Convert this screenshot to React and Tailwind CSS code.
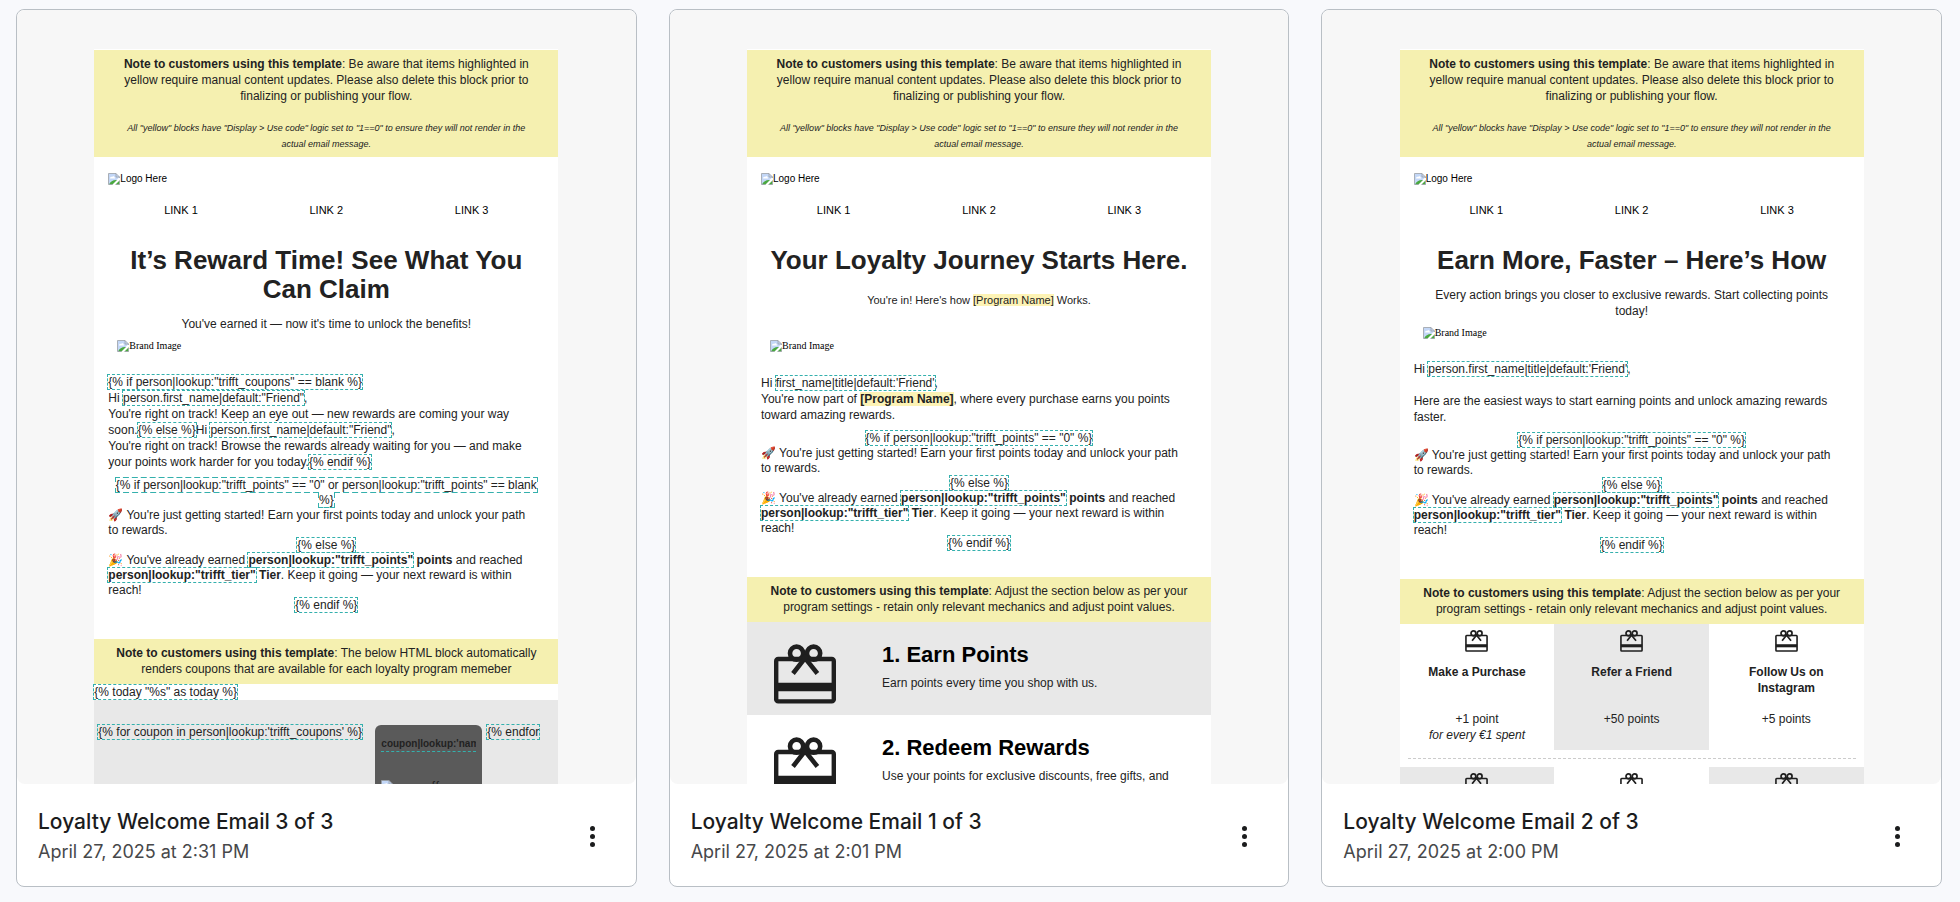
import React from "react";

const Code = ({ children }) => (
  <span className="outline-1 outline-dashed outline-[#34b0ad]">{children}</span>
);

const BrokenImage = () => (
  <svg viewBox="0 0 12 12" className="w-3 h-3 shrink-0">
    <path d="M0.5 0.5H8L11.5 4L4 11.5H0.5Z" fill="#c3d7f7" />
    <path d="M2 5.5C2 4 3.3 3.6 4 4C4.6 2.6 6.6 3 6.6 4.4C7.4 4.6 7.4 5.5 6.8 5.5Z" fill="#fff" />
    <path d="M1 11.5C2.5 8.2 5.5 6.6 9 7L4.5 11.5Z" fill="#4aa83f" />
    <path d="M7.5 11.5L11.5 7.5V11.5Z" fill="#4aa83f" />
    <path d="M4.5 11.5H0.5V0.5H8L11.5 4V5M8 0.5V4H11.5M11.5 7.5V11.5H7.5" fill="none" stroke="#9aa0a6" strokeWidth="0.8" />
  </svg>
);

const Gift = ({ className }) => (
  <svg viewBox="0 0 62 60" className={className} fill="none" stroke="#1f1f1f">
    <rect x="2.2" y="15" width="57.6" height="42.4" rx="2" strokeWidth="4.4" />
    <path d="M2 43H60" strokeWidth="8.4" />
    <circle cx="22.6" cy="9.2" r="6.6" strokeWidth="4.6" />
    <circle cx="39.6" cy="9.2" r="6.6" strokeWidth="4.6" />
    <path d="M33 11.5L19 29.5M29 11.5L43.4 29.5" strokeWidth="4.6" />
  </svg>
);

const Note = ({ children }) => (
  <div className="bg-[#f5f0b0] px-3 pt-[6px] pb-[7px] text-center">
    <b>Note to customers using this template</b>: {children}
  </div>
);

const EmailTop = ({ title, children }) => (
  <>
    <div className="bg-[#f5f0b0] px-3 pt-[6px] pb-[5px] text-center">
      <p>
        <b>Note to customers using this template</b>: Be aware that items highlighted in
        <br />
        yellow require manual content updates. Please also delete this block prior to
        <br />
        finalizing or publishing your flow.
      </p>
      <p className="mt-4 text-[9px] leading-4 italic">
        All "yellow" blocks have "Display &gt; Use code" logic set to "1==0" to ensure they will not render in the
        <br />
        actual email message.
      </p>
    </div>
    <div className="flex items-center mt-4 px-[14px] text-[10px] leading-3 text-black">
      <BrokenImage />
      Logo Here
    </div>
    <nav className="grid grid-cols-3 mt-[17px] px-[14px] text-[11px] leading-4 text-center text-black">
      <a href="#">LINK 1</a>
      <a href="#">LINK 2</a>
      <a href="#">LINK 3</a>
    </nav>
    <h1 className="mt-7 text-[26px] leading-[29px] font-bold text-center">{title}</h1>
    {children}
  </>
);

const BrandImage = () => (
  <div className="flex items-center px-[23px] h-3 font-['Liberation_Serif',serif] text-[10px] leading-3 text-black">
    <BrokenImage />
    Brand Image
  </div>
);

const PointsBlock = ({ condition }) => (
  <div className="mt-2 leading-[15px]">
    <p className="text-center">
      <Code>{condition}</Code>
    </p>
    <p>
      🚀 You're just getting started! Earn your first points today and unlock your path
      <br />
      to rewards.
    </p>
    <p className="text-center">
      <Code>{"{% else %}"}</Code>
    </p>
    <p>
      🎉 You've already earned{" "}
      <b>
        <Code>person|lookup:"trifft_points"</Code> points
      </b>{" "}
      and reached
      <br />
      <b>
        <Code>person|lookup:"trifft_tier"</Code> Tier
      </b>
      . Keep it going — your next reward is within
      <br />
      reach!
    </p>
    <p className="text-center">
      <Code>{"{% endif %}"}</Code>
    </p>
  </div>
);

const RewardEmail = () => (
  <>
    <EmailTop
      title={
        <>
          It’s Reward Time! See What You
          <br />
          Can Claim
        </>
      }
    >
      <p className="mt-3 text-center">You've earned it — now it's time to unlock the benefits!</p>
    </EmailTop>
    <div className="mt-2">
      <BrandImage />
    </div>
    <div className="mt-[22px] px-[14px] whitespace-nowrap">
      <p>
        <Code>{'{% if person|lookup:"trifft_coupons" == blank %}'}</Code>
        <br />
        Hi <Code>person.first_name|default:"Friend"</Code>,
        <br />
        You're right on track! Keep an eye out — new rewards are coming your way
        <br />
        soon.<Code>{"{% else %}"}</Code>Hi <Code>person.first_name|default:"Friend"</Code>,
        <br />
        You're right on track! Browse the rewards already waiting for you — and make
        <br />
        your points work harder for you today.<Code>{"{% endif %}"}</Code>
      </p>
      <PointsBlock
        condition={
          <>
            {'{% if person|lookup:"trifft_points" == "0" or person|lookup:"trifft_points" == blank'}
            <br />
            {"%}"}
          </>
        }
      />
    </div>
    <div className="mt-[26px]">
      <Note>
        The below HTML block automatically
        <br />
        renders coupons that are available for each loyalty program memeber
      </Note>
    </div>
    <p>
      <Code>{'{% today "%s" as today %}'}</Code>
    </p>
    <div className="flex items-start pl-1 pt-6 h-32 bg-[#e8e8e8] whitespace-nowrap">
      <div className="w-[273px]">
        <Code>{"{% for coupon in person|lookup:'trifft_coupons' %}"}</Code>
      </div>
      <div className="ml-1 mt-px px-[6px] pt-[11px] w-[107px] h-28 bg-[#5a5a5a] rounded-md text-[10px]">
        <p className="overflow-hidden h-4 leading-4 font-bold border-b border-dashed border-[#34b0ad]">
          coupon|lookup:'nam
        </p>
        <div className="flex items-start mt-7">
          <BrokenImage />
          <span className="ml-[38px] text-xs leading-3">{"{{"}</span>
        </div>
      </div>
      <span className="ml-[5px]">
        <Code>{"{% endfor"}</Code>
      </span>
    </div>
  </>
);

const Step = ({ title, text, className }) => (
  <div className={`flex h-[93px] pl-[27px] pt-[22px] ${className}`}>
    <Gift className="w-[62px] h-[60px] shrink-0" />
    <div className="ml-[46px] whitespace-nowrap">
      <h2 className="text-[22px] leading-[22px] font-bold text-black">{title}</h2>
      <p className="mt-[9px]">{text}</p>
    </div>
  </div>
);

const StartEmail = () => (
  <>
    <EmailTop title="Your Loyalty Journey Starts Here.">
      <p className="mt-[17px] text-[11px] leading-4 text-center">
        You're in! Here's how <span className="bg-[#fdf3b5]">[Program Name]</span> Works.
      </p>
    </EmailTop>
    <div className="mt-8">
      <BrandImage />
    </div>
    <div className="mt-[23px] px-[14px] whitespace-nowrap">
      <p>
        Hi <Code>first_name|title|default:'Friend'</Code>,
        <br />
        You're now part of <b className="bg-[#fdf3b5]">[Program Name]</b>, where every purchase earns you points
        <br />
        toward amazing rewards.
      </p>
      <PointsBlock condition={'{% if person|lookup:"trifft_points" == "0" %}'} />
    </div>
    <div className="mt-[26px]">
      <Note>
        Adjust the section below as per your
        <br />
        program settings - retain only relevant mechanics and adjust point values.
      </Note>
    </div>
    <Step title="1. Earn Points" text="Earn points every time you shop with us." className="bg-[#e8e8e8]" />
    <Step title="2. Redeem Rewards" text="Use your points for exclusive discounts, free gifts, and" className="bg-white" />
  </>
);

const Mechanic = ({ title, className, children }) => (
  <div className={`flex flex-col items-center pt-[6px] h-[126px] text-center ${className}`}>
    <Gift className="w-[23px] h-[22px]" />
    <b className="mt-3 h-8">{title}</b>
    <p className="mt-[15px]">{children}</p>
  </div>
);

const EarnEmail = () => (
  <>
    <EmailTop title="Earn More, Faster – Here’s How">
      <p className="mt-3 text-center">
        Every action brings you closer to exclusive rewards. Start collecting points
        <br />
        today!
      </p>
    </EmailTop>
    <div className="mt-2">
      <BrandImage />
    </div>
    <div className="mt-[22px] px-[14px] whitespace-nowrap">
      <p>
        Hi <Code>person.first_name|title|default:'Friend'</Code>,
        <br />
        <br />
        Here are the easiest ways to start earning points and unlock amazing rewards
        <br />
        faster.
      </p>
      <PointsBlock condition={'{% if person|lookup:"trifft_points" == "0" %}'} />
    </div>
    <div className="mt-[26px]">
      <Note>
        Adjust the section below as per your
        <br />
        program settings - retain only relevant mechanics and adjust point values.
      </Note>
    </div>
    <div className="grid grid-cols-3">
      <Mechanic title="Make a Purchase">
        +1 point
        <br />
        <i>for every €1 spent</i>
      </Mechanic>
      <Mechanic title="Refer a Friend" className="bg-[#e8e8e8]">
        +50 points
      </Mechanic>
      <Mechanic title={<>Follow Us on<br />Instagram</>}>+5 points</Mechanic>
    </div>
    <hr className="mx-2 my-2 border-dashed border-[#cccccc]" />
    <div className="grid grid-cols-3">
      <Mechanic className="bg-[#e8e8e8]" />
      <Mechanic />
      <Mechanic className="bg-[#e8e8e8]" />
    </div>
  </>
);

const templates = [
  { name: "Loyalty Welcome Email 3 of 3", date: "April 27, 2025 at 2:31 PM", Email: RewardEmail },
  { name: "Loyalty Welcome Email 1 of 3", date: "April 27, 2025 at 2:01 PM", Email: StartEmail },
  { name: "Loyalty Welcome Email 2 of 3", date: "April 27, 2025 at 2:00 PM", Email: EarnEmail },
];

const App = () => {
  return (
    <main className="min-h-screen bg-[#f8f9fc] pl-4 pr-[18px] pt-[9px] pb-4 font-['Inter',sans-serif]">
      <div className="grid grid-cols-3 gap-8">
        {templates.map(({ name, date, Email }) => (
          <article key={name} className="bg-white border border-[#b9bfc5] rounded-lg">
            <div className="h-[774px] overflow-hidden rounded-lg bg-[#f7f7f7] pt-[39px]">
              <div className="mx-auto w-3/4 min-h-full bg-white pt-px font-['Liberation_Sans',Arial,sans-serif] text-xs text-[#222222]">
                <Email />
              </div>
            </div>
            <div className="flex items-center justify-between pl-[21px] pr-[33px] pt-[22px] pb-5">
              <div>
                <h3 className="text-[21px] leading-8 font-medium text-[#1b1c1d]">{name}</h3>
                <p className="text-lg leading-7 text-[#47484a]">{date}</p>
              </div>
              <button type="button" aria-label="More options" className="flex flex-col gap-[3px] p-2 cursor-pointer">
                <span className="w-[5px] h-[5px] rounded-full bg-[#1b1c1d]" />
                <span className="w-[5px] h-[5px] rounded-full bg-[#1b1c1d]" />
                <span className="w-[5px] h-[5px] rounded-full bg-[#1b1c1d]" />
              </button>
            </div>
          </article>
        ))}
      </div>
    </main>
  );
};

export default App;
